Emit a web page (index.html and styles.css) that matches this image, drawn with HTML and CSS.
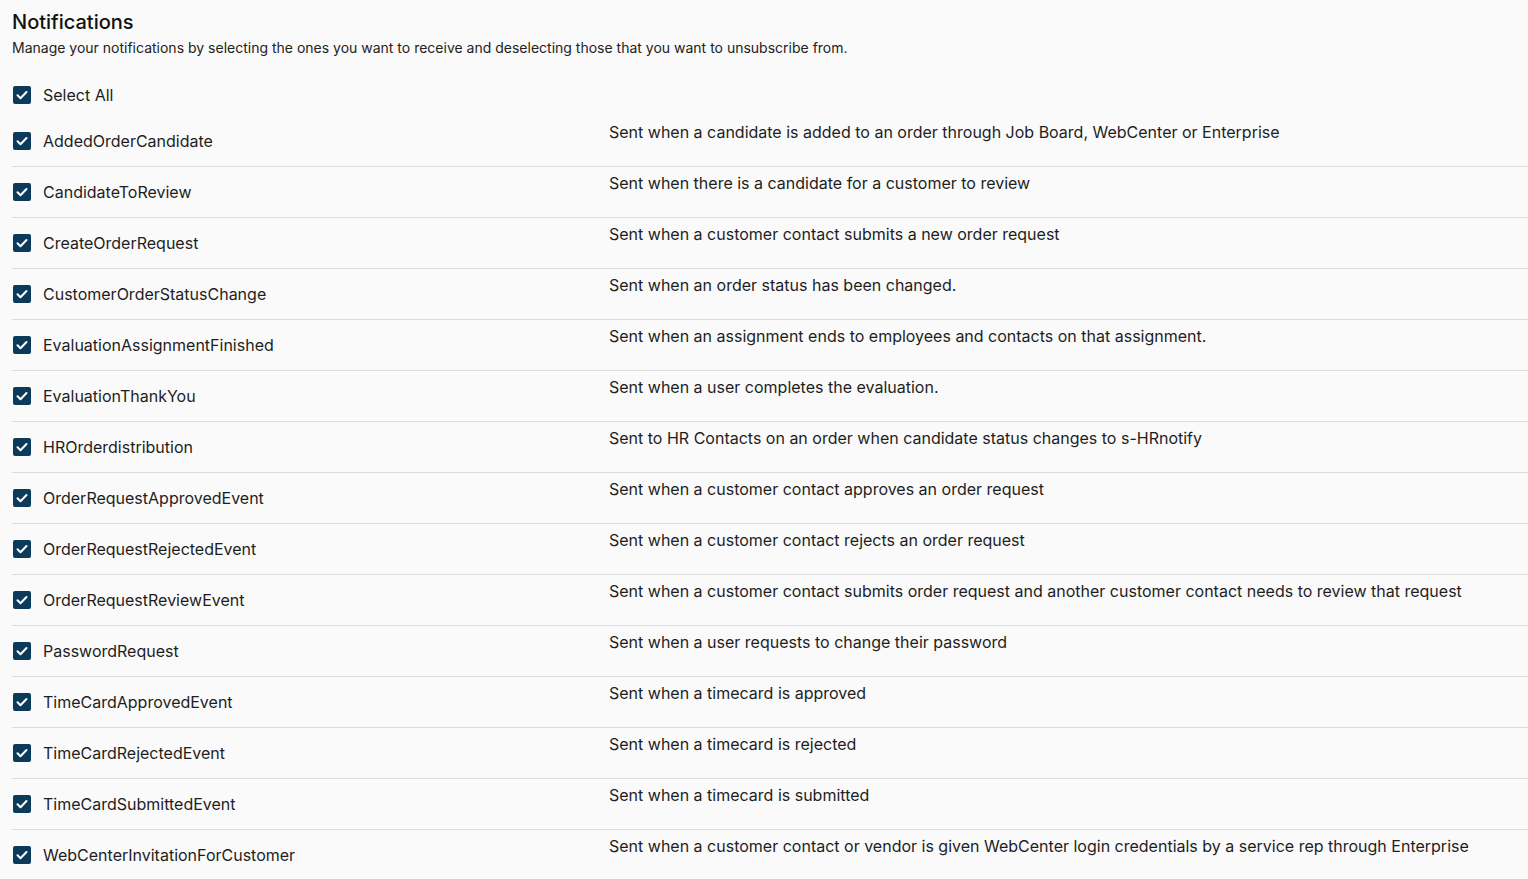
FILE: index.html
```html
<!DOCTYPE html>
<html lang="en">
<head>
  <meta charset="UTF-8" />
  <title>Notifications</title>
  <link rel="stylesheet" href="styles.css">
</head>
<body>
  <div class="page">
    <h1 class="title">Notifications</h1>
    <p class="subtitle">Manage your notifications by selecting the ones you want to receive and deselecting those that you want to unsubscribe from.</p>

    <label class="check select-all">
      <span class="box"><svg viewBox="0 0 18 18"><path d="M4.5 9.2l3 3 6-6.2" /></svg></span>
      <span>Select All</span>
    </label>

    <div class="list" id="list"></div>
  </div>

  <script>
    // notification rows
    const items = [
      ['AddedOrderCandidate', 'Sent when a candidate is added to an order through Job Board, WebCenter or Enterprise'],
      ['CandidateToReview', 'Sent when there is a candidate for a customer to review'],
      ['CreateOrderRequest', 'Sent when a customer contact submits a new order request'],
      ['CustomerOrderStatusChange', 'Sent when an order status has been changed.'],
      ['EvaluationAssignmentFinished', 'Sent when an assignment ends to employees and contacts on that assignment.'],
      ['EvaluationThankYou', 'Sent when a user completes the evaluation.'],
      ['HROrderdistribution', 'Sent to HR Contacts on an order when candidate status changes to s-HRnotify'],
      ['OrderRequestApprovedEvent', 'Sent when a customer contact approves an order request'],
      ['OrderRequestRejectedEvent', 'Sent when a customer contact rejects an order request'],
      ['OrderRequestReviewEvent', 'Sent when a customer contact submits order request and another customer contact needs to review that request'],
      ['PasswordRequest', 'Sent when a user requests to change their password'],
      ['TimeCardApprovedEvent', 'Sent when a timecard is approved'],
      ['TimeCardRejectedEvent', 'Sent when a timecard is rejected'],
      ['TimeCardSubmittedEvent', 'Sent when a timecard is submitted'],
      ['WebCenterInvitationForCustomer', 'Sent when a customer contact or vendor is given WebCenter login credentials by a service rep through Enterprise']
    ];

    const list = document.getElementById('list');
    items.forEach(([name, desc]) => {
      const row = document.createElement('div');
      row.className = 'row';
      row.innerHTML = `
        <label class="check">
          <span class="box"><svg viewBox="0 0 18 18"><path d="M4.5 9.2l3 3 6-6.2" /></svg></span>
          <span>${name}</span>
        </label>
        <div class="desc">${desc}</div>`;
      list.appendChild(row);
    });
  </script>
</body>
</html>
```

FILE: styles.css
```css
* {
  box-sizing: border-box;
  margin: 0;
  padding: 0;
}

body {
  background-color: #fafafa;
  font-family: Inter, 'Noto Sans', sans-serif;
  color: #1a1a1a;
}

.page {
  padding: 10px 0 0 12px;
}

.title {
  font-size: 20px;
  font-weight: 500;
  line-height: 24px;
  color: #111;
}

.subtitle {
  font-size: 14px;
  line-height: 20px;
  margin-top: 4px;
  color: #222;
}

.check {
  display: flex;
  align-items: center;
  gap: 12px;
  font-size: 16px;
  color: #1e1e1e;
}

.select-all {
  margin-top: 22px;
  margin-bottom: 6px;
  height: 30px;
  padding-left: 1px;
}

.box {
  width: 18px;
  height: 18px;
  border-radius: 2px;
  background: #0c3a5b;
  display: flex;
  align-items: center;
  justify-content: center;
  flex-shrink: 0;
}

.box svg {
  width: 18px;
  height: 18px;
  fill: none;
  stroke: #fff;
  stroke-width: 2;
  stroke-linecap: round;
  stroke-linejoin: round;
}

.row {
  display: grid;
  grid-template-columns: 597px 1fr;
  height: 51px;
  border-bottom: 1px solid #dcdcdc;
}

.row:last-child {
  height: 50px;
  border-bottom: none;
}

.row .check {
  padding-left: 1px;
}

.desc {
  font-size: 16px;
  line-height: 20px;
  padding-top: 6px;
  color: #1e1e1e;
}
```
